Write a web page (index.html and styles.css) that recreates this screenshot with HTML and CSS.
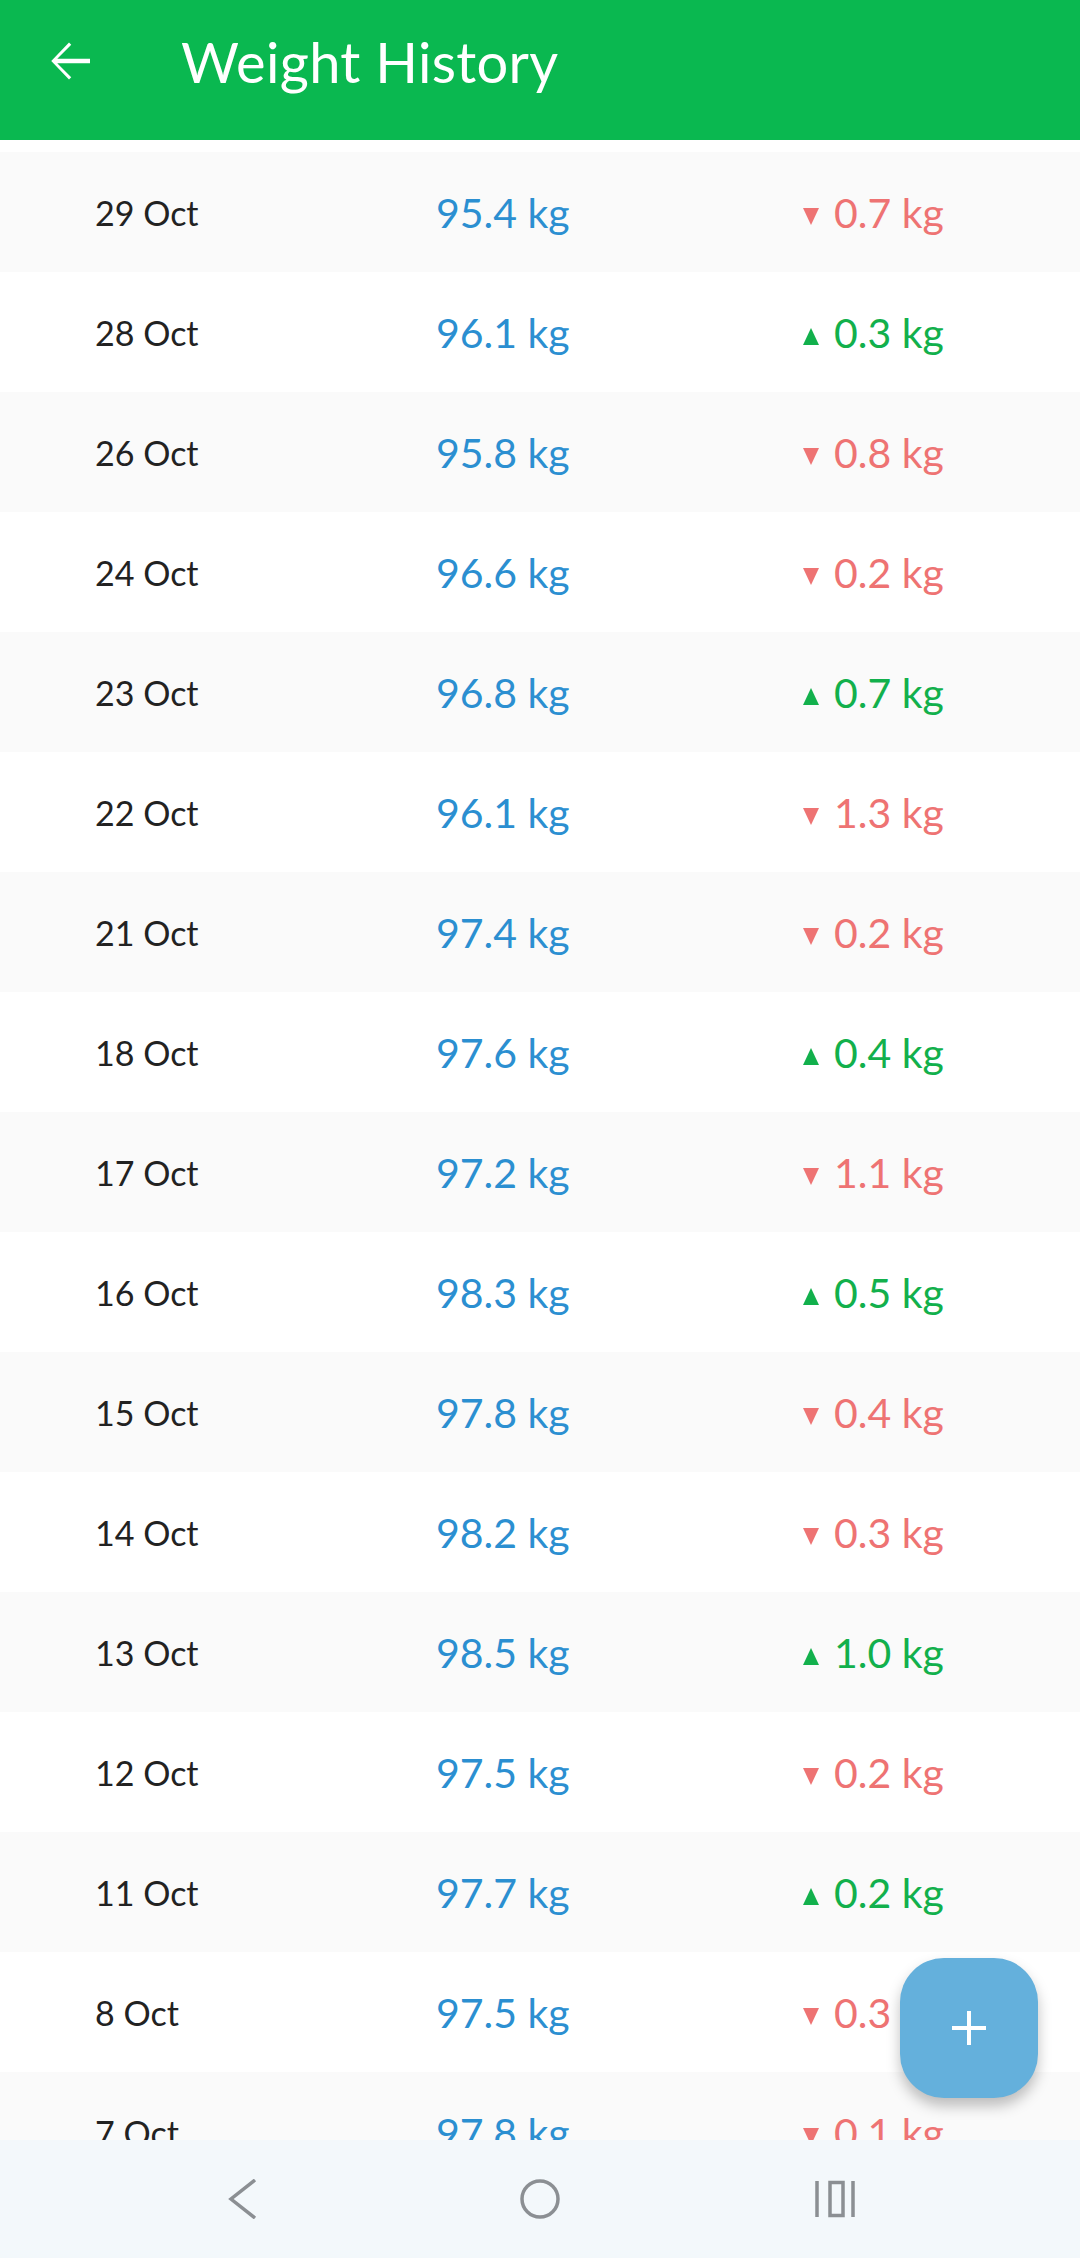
FILE: index.html
```html
<!DOCTYPE html>
<html lang="en">
<head>
  <meta charset="UTF-8">
  <meta name="viewport" content="width=device-width, initial-scale=1.0">
  <title>Weight History</title>
  <link rel="stylesheet" href="styles.css">
</head>
<body>

  <!-- Top bar -->
  <div class="appbar">
    <svg class="back" viewBox="0 0 24 24"><path d="M20 11.1H6.9l5.6-5.6-.9-.9L4.5 12l7.1 7.4.9-.9-5.6-5.6H20z"/></svg>
    <h1>Weight History</h1>
  </div>

  <!-- Weight entries -->
  <div class="list">
    <div class="row"><span class="date">29 Oct</span><span class="weight">95.4 kg</span><span class="delta down"><i></i>0.7 kg</span></div>
    <div class="row"><span class="date">28 Oct</span><span class="weight">96.1 kg</span><span class="delta up"><i></i>0.3 kg</span></div>
    <div class="row"><span class="date">26 Oct</span><span class="weight">95.8 kg</span><span class="delta down"><i></i>0.8 kg</span></div>
    <div class="row"><span class="date">24 Oct</span><span class="weight">96.6 kg</span><span class="delta down"><i></i>0.2 kg</span></div>
    <div class="row"><span class="date">23 Oct</span><span class="weight">96.8 kg</span><span class="delta up"><i></i>0.7 kg</span></div>
    <div class="row"><span class="date">22 Oct</span><span class="weight">96.1 kg</span><span class="delta down"><i></i>1.3 kg</span></div>
    <div class="row"><span class="date">21 Oct</span><span class="weight">97.4 kg</span><span class="delta down"><i></i>0.2 kg</span></div>
    <div class="row"><span class="date">18 Oct</span><span class="weight">97.6 kg</span><span class="delta up"><i></i>0.4 kg</span></div>
    <div class="row"><span class="date">17 Oct</span><span class="weight">97.2 kg</span><span class="delta down"><i></i>1.1 kg</span></div>
    <div class="row"><span class="date">16 Oct</span><span class="weight">98.3 kg</span><span class="delta up"><i></i>0.5 kg</span></div>
    <div class="row"><span class="date">15 Oct</span><span class="weight">97.8 kg</span><span class="delta down"><i></i>0.4 kg</span></div>
    <div class="row"><span class="date">14 Oct</span><span class="weight">98.2 kg</span><span class="delta down"><i></i>0.3 kg</span></div>
    <div class="row"><span class="date">13 Oct</span><span class="weight">98.5 kg</span><span class="delta up"><i></i>1.0 kg</span></div>
    <div class="row"><span class="date">12 Oct</span><span class="weight">97.5 kg</span><span class="delta down"><i></i>0.2 kg</span></div>
    <div class="row"><span class="date">11 Oct</span><span class="weight">97.7 kg</span><span class="delta up"><i></i>0.2 kg</span></div>
    <div class="row"><span class="date">8 Oct</span><span class="weight">97.5 kg</span><span class="delta down"><i></i>0.3 kg</span></div>
    <div class="row"><span class="date">7 Oct</span><span class="weight">97.8 kg</span><span class="delta down"><i></i>0.1 kg</span></div>
  </div>

  <!-- Add button -->
  <button class="fab" aria-label="Add">
    <svg viewBox="0 0 36 36"><path d="M18 1v34M1 18h34"/></svg>
  </button>

  <!-- System navigation -->
  <div class="navbar">
    <svg class="nav-icon" viewBox="0 0 40 40"><path d="M30 1 L6 20 L30 39"/></svg>
    <svg class="nav-icon" viewBox="0 0 40 40"><circle cx="20" cy="20" r="18"/></svg>
    <svg class="nav-icon" viewBox="0 0 40 40"><path d="M2 2v36M38 2v36"/><rect x="15" y="3.5" width="13" height="33"/></svg>
  </div>

</body>
</html>
```

FILE: styles.css
```css
body {
  margin: 0;
  height: 2258px;
  display: flex;
  flex-direction: column;
  overflow: hidden;
  background-color: #ffffff;
  font-family: Lato, "Open Sans", sans-serif;
}

.appbar {
  flex: none;
  height: 140px;
  box-sizing: border-box;
  padding: 0 0 18px 40px;
  display: flex;
  align-items: center;
  background-color: #0ab850;
  color: white;
}

.back {
  width: 60px;
  height: 60px;
  fill: white;
}

.appbar h1 {
  margin: 0 0 0 81px;
  font-size: 56px;
  font-weight: 400;
  letter-spacing: 0.3px;
}

.list {
  flex: 1;
  overflow: hidden;
  padding-top: 12px;
}

.row {
  height: 120px;
  display: grid;
  grid-template-columns: 341px 366px 1fr;
  align-items: center;
  padding-left: 95px;
}

.row:nth-child(odd) {
  background-color: #fafafa;
}

.date {
  font-size: 34px;
  color: #222222;
}

.weight {
  font-size: 41px;
  color: #2b8fd1;
}

.delta {
  font-size: 41px;
}

.delta i {
  display: inline-block;
  width: 0;
  height: 0;
  margin: 0 15px 3px 1px;
  border-left: 8.5px solid transparent;
  border-right: 8.5px solid transparent;
}

.delta.up {
  color: #12b04c;
}

.delta.up i {
  border-bottom: 17px solid #12b04c;
}

.delta.down {
  color: #ee7373;
}

.delta.down i {
  border-top: 17px solid #ee7373;
}

.fab {
  position: absolute;
  right: 42px;
  top: 1958px;
  width: 138px;
  height: 140px;
  padding: 0;
  border: none;
  border-radius: 44px;
  background-color: #64b0dc;
  box-shadow: 0 8px 14px rgba(0, 0, 0, 0.25);
  display: flex;
  justify-content: center;
  align-items: center;
}

.fab svg {
  width: 36px;
  height: 36px;
  stroke: white;
  stroke-width: 4;
  fill: none;
}

.navbar {
  flex: none;
  height: 118px;
  display: flex;
  justify-content: center;
  align-items: center;
  gap: 255px;
  background-color: #f3f8fb;
}

.nav-icon {
  width: 40px;
  height: 40px;
  fill: none;
  stroke: #8b8f93;
  stroke-width: 3.5;
}
```
